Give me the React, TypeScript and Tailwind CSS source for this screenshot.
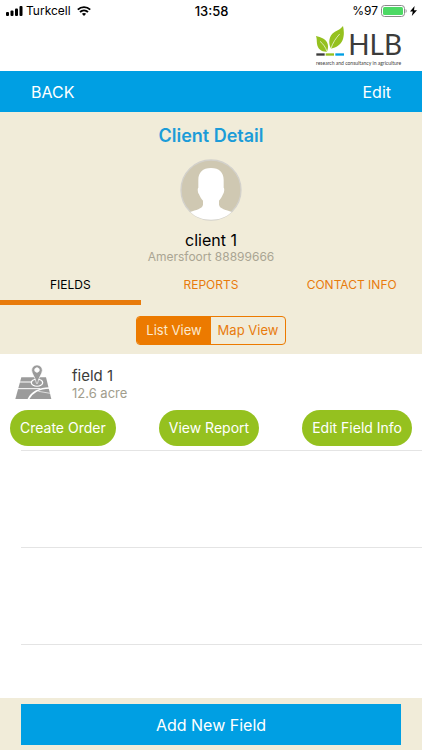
import { useState } from 'react'
import type { ReactNode } from 'react'

type Tab = 'FIELDS' | 'REPORTS' | 'CONTACT INFO'
type View = 'List View' | 'Map View'

interface Field {
  name: string
  size: string
}

const TABS: Tab[] = ['FIELDS', 'REPORTS', 'CONTACT INFO']
const VIEWS: View[] = ['List View', 'Map View']
const FIELDS: Field[] = [{ name: 'field 1', size: '12.6 acre' }]

function StatusBar() {
  return (
    <div className="grid h-5 grid-cols-3 items-center pt-px pr-[5px] pl-[6px] text-[13px] leading-5 text-black">
      <div className="flex items-center gap-[3px]">
        <svg width="17" height="10" viewBox="0 0 17 10" aria-hidden="true">
          <rect x="0" y="6" width="3" height="4" rx="1" />
          <rect x="4.5" y="4.5" width="3" height="5.5" rx="1" />
          <rect x="9" y="2.5" width="3" height="7.5" rx="1" />
          <rect x="13.5" y="0" width="3" height="10" rx="1" />
        </svg>
        <span className="text-xs">Turkcell</span>
        <svg className="ml-[3px]" width="14" height="10" viewBox="0 0 14 10" aria-hidden="true">
          <path d="M0.8 3.6 C4.3 0.3 9.7 0.3 13.2 3.6" fill="none" stroke="#000" strokeWidth="1.9" />
          <path d="M3 6 C5.3 3.9 8.7 3.9 11 6" fill="none" stroke="#000" strokeWidth="1.9" />
          <path d="M7 10 L4.9 7.7 C6.1 6.7 7.9 6.7 9.1 7.7 Z" />
        </svg>
      </div>
      <div className="text-center font-medium">13:58</div>
      <div className="flex items-center justify-end gap-[3px]">
        <span className="text-xs">%97</span>
        <svg width="26" height="12" viewBox="0 0 26 12" aria-hidden="true">
          <rect x="0.5" y="0.5" width="23" height="11" rx="3" fill="#fff" stroke="#8a8a8a" />
          <rect x="2" y="2" width="20" height="8" rx="1.5" fill="#4cd964" />
          <path d="M24.6 4 C26 4.6 26 7.4 24.6 8 Z" fill="#8a8a8a" />
        </svg>
        <svg width="7" height="10" viewBox="0 0 7 10" aria-hidden="true">
          <path d="M4.6 0 L0 5.6 H2.8 L1.8 10 L7 4.2 H4 Z" />
        </svg>
      </div>
    </div>
  )
}

function Logo() {
  return (
    <div className="flex w-[86px] flex-col">
      <div className="flex items-end justify-between">
        <svg width="28" height="31" viewBox="0 0 84 93" aria-hidden="true">
          <path d="M0 30 C14 34 31 38 35 54 C37 62 36 70 33 77 C16 78 5 68 3 53 C2 45 3 38 0 30 Z" fill="#95c11f" />
          <path d="M81 0 C86 20 85 48 66 59 C60 63 54 65 45 68 C37 54 38 34 49 23 C59 14 72 12 81 0 Z" fill="#95c11f" />
          <path d="M12 46 C22 54 29 64 33 77" fill="none" stroke="#fff" strokeWidth="2" />
          <path d="M44 70 C50 50 60 36 71 24" fill="none" stroke="#fff" strokeWidth="2" />
          <rect x="1" y="82" width="25" height="7" fill="#3c3c3b" />
          <rect x="29" y="82" width="25" height="7" fill="#95c11f" />
          <rect x="58" y="82" width="26" height="7" fill="#009fe3" />
        </svg>
        <span className="font-[Lato] text-[28px] leading-[26px] text-[#3c3c3b]">HLB</span>
      </div>
      <span className="mt-[2px] whitespace-nowrap font-[Lato] text-[5px] leading-[8px] text-[#3c3c3b]">
        research and consultancy in agriculture
      </span>
    </div>
  )
}

function Avatar() {
  return (
    <svg width="62" height="62" viewBox="0 0 186 186" aria-hidden="true">
      <circle cx="93" cy="93" r="90" fill="#cfc8b2" stroke="#d3d1cb" strokeWidth="4" />
      <path
        d="M93 27 C68 27 55 41 55 62 L55 86 C52 88 53 100 57 106 C60 113 64 120 69 125 L69 137 C67 150 47 152 31 159 C47 175 68 182 93 182 C118 182 139 175 155 159 C139 152 119 150 117 137 L117 125 C122 120 126 113 129 106 C133 100 134 88 131 86 L131 62 C131 41 118 27 93 27 Z"
        fill="#fff"
      />
    </svg>
  )
}

function MapIcon() {
  return (
    <svg width="37" height="34" viewBox="0 0 111 102" fill="#9b9b9b" aria-hidden="true">
      <path d="M19 37 H93 L109 102 H1 Z" />
      <g fill="none" stroke="#fff">
        <path d="M13 51 H52" strokeWidth="3" />
        <path d="M8 71 H76" strokeWidth="3" />
        <path d="M40 103 C48 84 72 69 104 69" strokeWidth="5" />
        <path d="M70 79 L106 85" strokeWidth="2" />
      </g>
      <ellipse cx="66" cy="53" rx="19" ry="12" fill="#fff" />
      <ellipse cx="66" cy="53" rx="15" ry="9" />
      <path
        fillRule="evenodd"
        stroke="#fff"
        strokeWidth="2"
        d="M66 0 C57 0 50 7 50 16 C50 27 61 36 64 54 C65 57 67 57 68 54 C71 36 82 27 82 16 C82 7 75 0 66 0 Z M66 8 A7 7 0 1 1 65.9 8 Z"
      />
    </svg>
  )
}

function PillButton({ children }: { children: ReactNode }) {
  return (
    <button className="h-9 cursor-pointer rounded-[18px] bg-[#95c11f] px-[10px] text-sm whitespace-nowrap text-white">
      {children}
    </button>
  )
}

function FieldRow({ field }: { field: Field }) {
  return (
    <li className="flex h-[97px] flex-col">
      <div className="flex h-14 items-center gap-5 pl-[15px]">
        <MapIcon />
        <div className="pt-1">
          <div className="text-[15px] leading-[18px] text-[#3c3c3b]">{field.name}</div>
          <div className="text-[13px] leading-4 text-[#a19d8c]">{field.size}</div>
        </div>
      </div>
      <div className="flex justify-between px-[10px]">
        <PillButton>Create Order</PillButton>
        <PillButton>View Report</PillButton>
        <PillButton>Edit Field Info</PillButton>
      </div>
      <div className="mt-auto ml-[21px] h-px bg-[#e4e4e4]" />
    </li>
  )
}

function EmptyRow() {
  return <li className="ml-[21px] h-[97px] border-b border-[#e4e4e4]" />
}

export default function App() {
  const [tab, setTab] = useState<Tab>('FIELDS')
  const [view, setView] = useState<View>('List View')

  return (
    <div className="flex min-h-screen flex-col bg-white font-[Inter,sans-serif]">
      <StatusBar />
      <header className="flex justify-end pt-[6px] pr-5 pb-1">
        <Logo />
      </header>

      <nav className="flex h-[41px] items-center justify-between bg-[#009fe3] px-[31px] text-base text-white">
        <button className="cursor-pointer">BACK</button>
        <button className="cursor-pointer">Edit</button>
      </nav>

      <section className="flex flex-col items-center bg-[#f1ecd9] pt-3 pb-[9px]">
        <h1 className="text-lg leading-6 font-semibold text-[#1c9cd8]">Client Detail</h1>
        <div className="mt-[11px]">
          <Avatar />
        </div>
        <div className="mt-[10px] text-base leading-[18px] text-black">client 1</div>
        <div className="text-xs leading-4 text-[#aaa593]">Amersfoort 88899666</div>

        <div className="mt-[7px] grid w-full grid-cols-3">
          {TABS.map((t) => (
            <button
              key={t}
              onClick={() => setTab(t)}
              className={`h-[33px] cursor-pointer border-b-[5px] pb-[2px] text-xs ${
                t === tab ? 'border-[#e87b0c] text-black' : 'border-transparent text-[#e87b0c]'
              }`}
            >
              {t}
            </button>
          ))}
        </div>

        <div className="mt-[11px] grid h-[29px] w-[150px] grid-cols-2 overflow-hidden rounded border border-[#ec7a00]">
          {VIEWS.map((v) => (
            <button
              key={v}
              onClick={() => setView(v)}
              className={`cursor-pointer text-[13px] whitespace-nowrap ${
                v === view ? 'bg-[#ec7a00] text-[#fbe9cf]' : 'text-[#e87b0c]'
              }`}
            >
              {v}
            </button>
          ))}
        </div>
      </section>

      <ul className="flex-1">
        {FIELDS.map((f) => (
          <FieldRow key={f.name} field={f} />
        ))}
        <EmptyRow />
        <EmptyRow />
      </ul>

      <footer className="bg-[#f1ecd9] px-[21px] pt-[6px] pb-[5px]">
        <button className="h-[41px] w-full cursor-pointer bg-[#009fe3] text-base text-white">
          Add New Field
        </button>
      </footer>
    </div>
  )
}
